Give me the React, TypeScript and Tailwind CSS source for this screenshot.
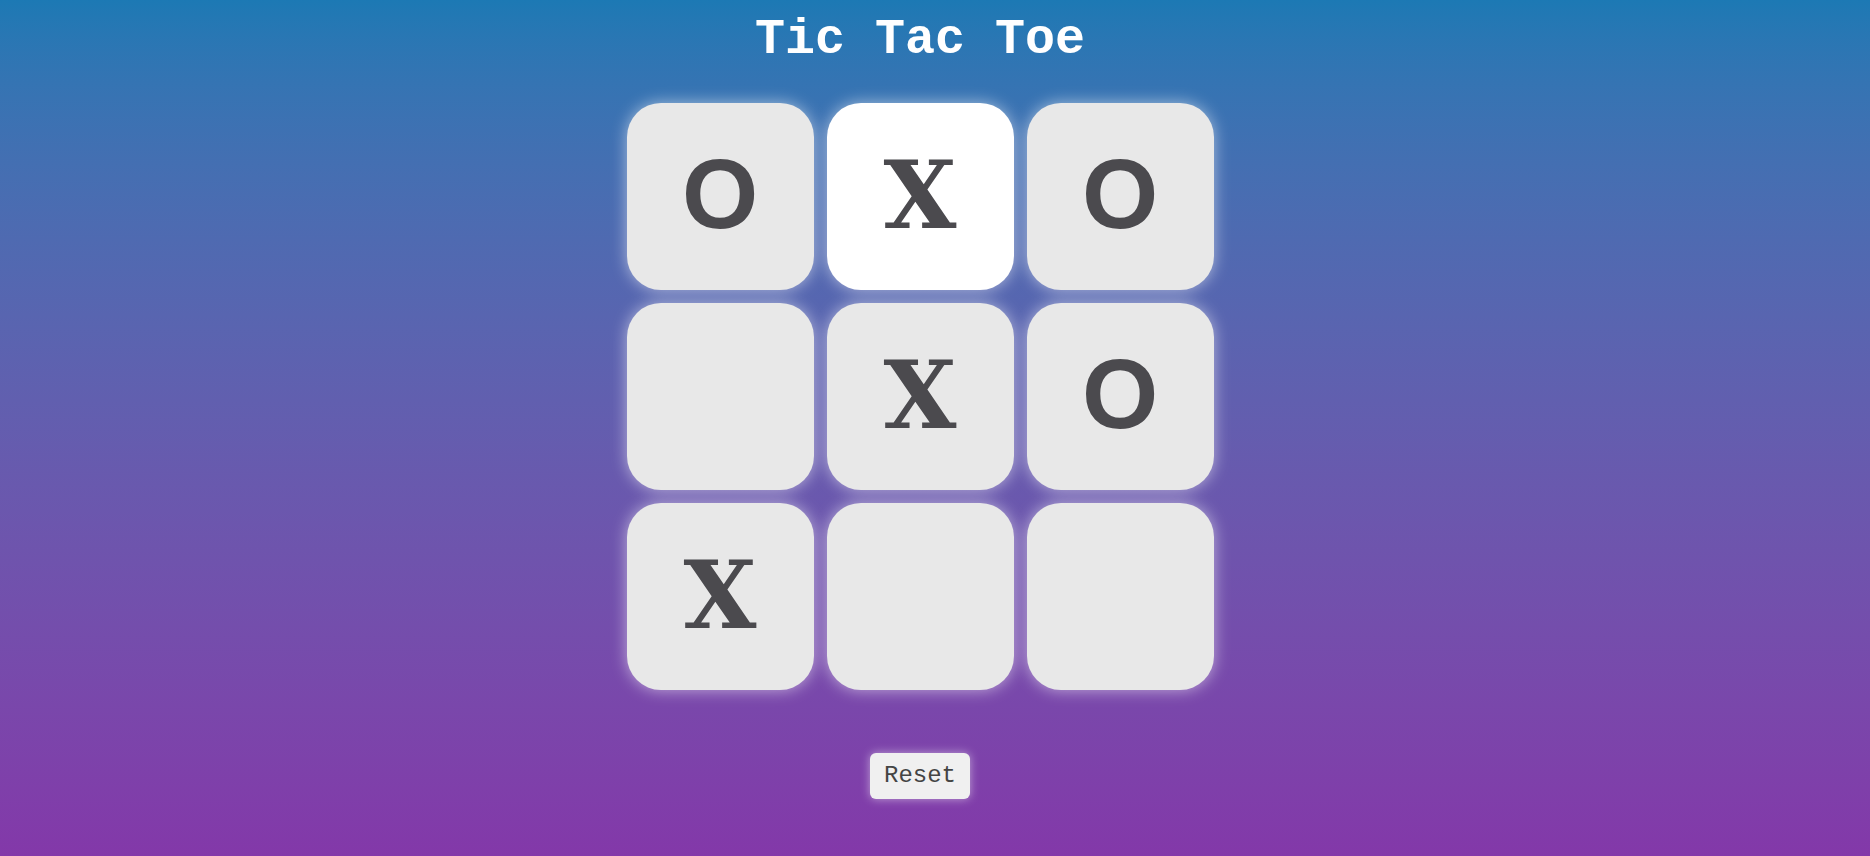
import { useState } from "react";

type Mark = "X" | "O" | null;

const initial: Mark[] = ["O", "X", "O", null, "X", "O", "X", null, null];

export default function App() {
  const [board, setBoard] = useState<Mark[]>(initial);
  const [active, setActive] = useState(1);

  const reset = () => {
    setBoard(Array(9).fill(null));
    setActive(-1);
  };

  return (
    <div
      className="min-h-[856px] w-full bg-gradient-to-b from-[#1c79b4] to-[#8338a9] pr-[30px]"
      style={{ fontFamily: '"Courier New", "Liberation Mono", monospace' }}
    >
      <div className="flex flex-col items-center">
        <h1 className="mt-[12px] text-[50px] leading-[56px] font-bold text-white">
          Tic Tac Toe
        </h1>
        <div className="mt-[35px] grid grid-cols-[187px_187px_187px] gap-[13px]">
          {board.map((m, i) => (
            <button
              key={i}
              onMouseEnter={() => setActive(i)}
              className={`flex h-[187px] w-[187px] items-center justify-center rounded-[34px] leading-none font-bold text-[#4b4a4e] shadow-[0_0_16px_rgba(255,255,255,0.55)] ${
                active === i ? "bg-white" : "bg-[#e8e8e8]"
              } ${
                m === "X"
                  ? "pb-[4px] font-['DejaVu_Serif',serif] text-[94px]"
                  : "pb-[6px] font-['Liberation_Sans',sans-serif] text-[98px]"
              }`}
            >
              {m}
            </button>
          ))}
        </div>
        <button
          onClick={reset}
          className="mt-[63px] h-[46px] w-[100px] rounded-[6px] bg-[#f0f0f0] text-[24px] text-[#444] shadow-[0_0_10px_rgba(255,255,255,0.5)]"
        >
          Reset
        </button>
      </div>
    </div>
  );
}
